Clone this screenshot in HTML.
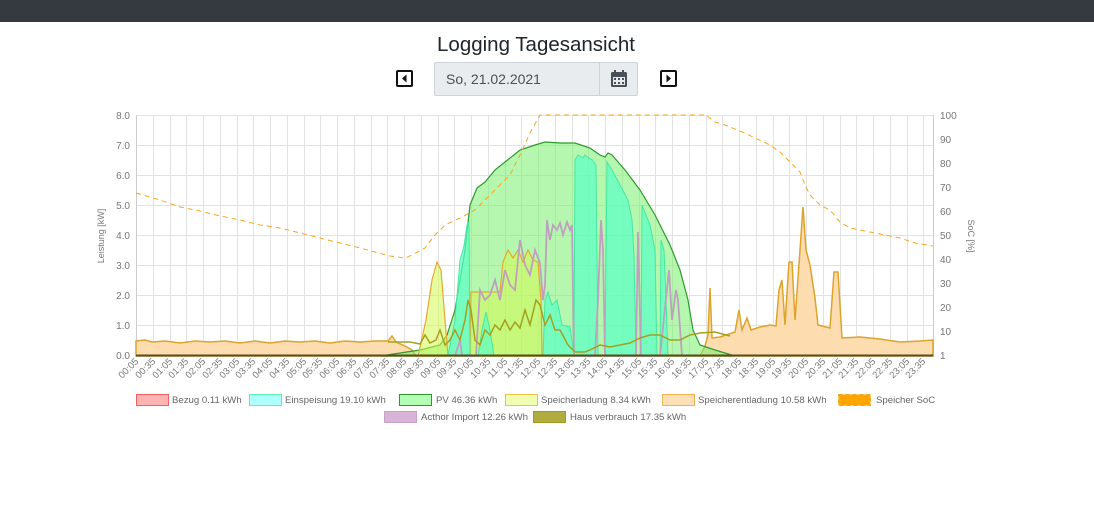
<!DOCTYPE html>
<html><head><meta charset="utf-8"><style>
body{margin:0;width:1094px;height:532px;background:#fff;font-family:"Liberation Sans",sans-serif;overflow:hidden;position:relative}
.top{height:22px;background:#343a40}
h1{position:absolute;top:33px;left:436px;width:200px;text-align:center;margin:0;font-weight:normal;font-size:20.5px;color:#212529;white-space:nowrap}
.date{position:absolute;left:434px;top:62px;width:202px;height:32px;border:1px solid #ced4da;background:#e9ecef;border-radius:2px}
.date span{position:absolute;left:11px;top:8px;font-size:14px;color:#495057}
.date .cal{position:absolute;left:164px;top:0;width:38px;height:32px;border-left:1px solid #ced4da}
.arrow{position:absolute;top:70px;width:17px;height:17px;border:2px solid #111;border-radius:2px;box-sizing:border-box}
</style></head><body>
<div class="top"></div>
<h1>Logging Tagesansicht</h1>
<div class="arrow" style="left:396px"><svg width="13" height="13" style="position:absolute;left:0;top:0"><path d="M8.5,2.5 L4,6.5 L8.5,10.5Z" fill="#111"/></svg></div>
<div class="date"><span>So, 21.02.2021</span><div class="cal"><svg width="38" height="32"><rect x="11" y="9" width="16" height="15" rx="1.5" fill="#495057"/><rect x="13" y="14" width="12" height="8" fill="#e9ecef"/><rect x="14" y="7" width="2" height="4" fill="#495057"/><rect x="22" y="7" width="2" height="4" fill="#495057"/><g fill="#495057"><rect x="14" y="15" width="2" height="2"/><rect x="18" y="15" width="2" height="2"/><rect x="22" y="15" width="2" height="2"/><rect x="14" y="19" width="2" height="2"/><rect x="18" y="19" width="2" height="2"/><rect x="22" y="19" width="2" height="2"/></g></svg></div></div>
<div class="arrow" style="left:660px"><svg width="13" height="13" style="position:absolute;left:0;top:0"><path d="M4.5,2.5 L9,6.5 L4.5,10.5Z" fill="#111"/></svg></div>

<svg width="1094" height="532" style="position:absolute;left:0;top:0" font-family="Liberation Sans, sans-serif">
<g stroke="#e2e2e2" stroke-width="1">
<line x1="136" y1="115.5" x2="933" y2="115.5"/><line x1="136" y1="145.5" x2="933" y2="145.5"/><line x1="136" y1="175.5" x2="933" y2="175.5"/><line x1="136" y1="205.5" x2="933" y2="205.5"/><line x1="136" y1="235.5" x2="933" y2="235.5"/><line x1="136" y1="265.5" x2="933" y2="265.5"/><line x1="136" y1="295.5" x2="933" y2="295.5"/><line x1="136" y1="325.5" x2="933" y2="325.5"/>
</g>
<g id="vg" stroke="#e2e2e2" stroke-width="1"></g>
<line x1="136.5" y1="115" x2="136.5" y2="357" stroke="#ccc"/>
<line x1="933.5" y1="115" x2="933.5" y2="357" stroke="#ccc"/>
<g font-size="10" fill="#777" text-anchor="end">
<text x="130" y="119">8.0</text><text x="130" y="149">7.0</text><text x="130" y="179">6.0</text><text x="130" y="209">5.0</text><text x="130" y="239">4.0</text><text x="130" y="269">3.0</text><text x="130" y="299">2.0</text><text x="130" y="329">1.0</text><text x="130" y="359">0.0</text>
</g>
<g font-size="10" fill="#777">
<text x="940" y="119">100</text><text x="940" y="143">90</text><text x="940" y="167">80</text><text x="940" y="191">70</text><text x="940" y="215">60</text><text x="940" y="239">50</text><text x="940" y="263">40</text><text x="940" y="287">30</text><text x="940" y="311">20</text><text x="940" y="335">10</text><text x="940" y="359">1</text>
</g>
<text transform="translate(104,236) rotate(-90)" font-size="9" fill="#777" text-anchor="middle">Leistung [kW]</text>
<text transform="translate(968,236) rotate(90)" font-size="9" fill="#777" text-anchor="middle">SoC [%]</text>

<path d="M136,356 L136,341 L145,340 L152,342 L165,341 L180,343 L195,341 L210,342 L225,341 L240,343 L255,341 L270,343 L285,341 L300,342 L315,341 L330,343 L345,341 L360,342 L375,341 L388,341 L392,336 L396,342 L405,346 L412,350 L416,356 L700,356 L705,346 L708,335 L710,288 L712,338 L720,337 L735,332 L739,310 L742,330 L747,318 L751,330 L760,327 L770,325 L776,326 L779,290 L782,280 L785,325 L789,262 L792,262 L795,320 L800,250 L803,207 L806,250 L810,265 L815,298 L818,325 L830,328 L834,272 L838,272 L842,338 L860,337 L880,339 L900,342 L920,341 L933,340 L933,356Z" fill="#fddcb0" stroke="#dca42a" stroke-width="1.5"/>
<path d="M380,356 L420,350 L440,345 L447,335 L455,310 L465,250 L470,205 L477,188 L485,182 L495,170 L505,162 L520,150 L535,145 L545,142 L560,143 L575,143 L590,148 L600,155 L605,157 L608,153 L612,155 L625,170 L640,190 L655,215 L670,245 L680,270 L688,300 L693,330 L700,345 L715,350 L735,356Z" fill="rgba(120,240,110,0.55)" stroke="#2e9a2e" stroke-width="1.2"/>
<g fill="rgba(210,250,80,0.55)" stroke="#e8a830" stroke-width="1.2">
<path d="M418,356 L426,320 L432,280 L437,262 L441,270 L445,320 L448,356Z"/>
<path d="M470,356 L471,292 L500,292 L503,262 L508,250 L513,258 L518,250 L523,262 L528,250 L533,260 L538,262 L541,300 L542,356Z"/>
</g>
<g fill="rgba(90,255,200,0.7)" stroke="#45e8a0" stroke-width="1">
<path d="M448,356 L455,320 L460,260 L464,246 L467,225 L469,222 L470,356Z"/>
<path d="M478,356 L482,330 L486,312 L490,330 L494,356Z"/>
<path d="M543,356 L545,300 L548,292 L552,305 L557,300 L562,325 L570,327 L574,356Z"/>
<path d="M574,356 L575,160 L578,155 L583,158 L585,155 L589,158 L592,160 L596,165 L598,356Z"/>
<path d="M605,356 L607,162 L612,170 L620,185 L628,200 L632,220 L634,255 L636,356Z"/>
<path d="M641,356 L642,205 L650,225 L655,250 L657,356Z"/>
<path d="M660,356 L661,240 L664,250 L666,300 L668,356Z"/>
</g>
<path d="M455,356 L460,340 L462,356 L476,356 L480,290 L485,300 L490,295 L495,280 L500,300 L505,270 L510,285 L515,290 L520,240 L525,265 L530,275 L535,250 L540,263 L543,300 L545,285 L547,220 L550,240 L553,225 L557,230 L560,223 L563,235 L567,222 L570,230 L572,225 L574,356 L595,356 L598,300 L601,220 L603,250 L605,356 L636,356 L638,232 L641,356 L660,356 L669,270 L672,320 L676,290 L678,300 L682,356" fill="none" stroke="#c0a0c0" stroke-width="1.8"/>
<path d="M388,342 L410,342 L420,344 L425,335 L430,343 L436,340 L440,330 L445,345 L450,340 L455,330 L460,340 L465,320 L468,300 L471,310 L475,340 L480,345 L485,330 L490,335 L495,325 L500,330 L505,320 L510,330 L515,322 L520,328 L525,310 L530,325 L536,300 L540,305 L545,325 L550,315 L555,330 L560,330 L568,345 L575,352 L585,352 L590,350 L600,345 L610,347 L620,345 L630,343 L640,338 L650,335 L660,335 L670,340 L680,340 L690,335 L700,333 L715,332 L730,336" fill="none" stroke="#a4a020" stroke-width="1.5"/>
<line x1="136" y1="355.5" x2="933" y2="355.5" stroke="#5a4a20" stroke-width="2"/>
<path d="M136,193 L160,200 L180,207 L200,211 L220,216 L240,220 L260,225 L280,228 L300,233 L320,238 L340,243 L360,248 L375,252 L390,256 L405,258 L412,255 L425,248 L435,235 L445,225 L460,218 L475,210 L490,195 L500,185 L510,175 L520,155 L530,133 L540,115 L706,115 L715,122 L725,125 L740,131 L755,138 L770,145 L780,152 L790,162 L800,172 L805,185 L810,195 L820,205 L830,210 L840,222 L850,228 L860,230 L880,234 L900,238 L915,243 L933,246" fill="none" stroke="#f5a623" stroke-width="1" stroke-dasharray="5,4"/>

<g font-size="9.5" fill="#777" text-anchor="end">
<text transform="translate(139,362) rotate(-45)">00:05</text><text transform="translate(156,362) rotate(-45)">00:35</text><text transform="translate(173,362) rotate(-45)">01:05</text><text transform="translate(189,362) rotate(-45)">01:35</text><text transform="translate(206,362) rotate(-45)">02:05</text><text transform="translate(223,362) rotate(-45)">02:35</text><text transform="translate(240,362) rotate(-45)">03:05</text><text transform="translate(256,362) rotate(-45)">03:35</text><text transform="translate(273,362) rotate(-45)">04:05</text><text transform="translate(290,362) rotate(-45)">04:35</text><text transform="translate(307,362) rotate(-45)">05:05</text><text transform="translate(323,362) rotate(-45)">05:35</text><text transform="translate(340,362) rotate(-45)">06:05</text><text transform="translate(357,362) rotate(-45)">06:35</text><text transform="translate(374,362) rotate(-45)">07:05</text><text transform="translate(390,362) rotate(-45)">07:35</text><text transform="translate(407,362) rotate(-45)">08:05</text><text transform="translate(424,362) rotate(-45)">08:35</text><text transform="translate(441,362) rotate(-45)">09:05</text><text transform="translate(457,362) rotate(-45)">09:35</text><text transform="translate(474,362) rotate(-45)">10:05</text><text transform="translate(491,362) rotate(-45)">10:35</text><text transform="translate(508,362) rotate(-45)">11:05</text><text transform="translate(524,362) rotate(-45)">11:35</text><text transform="translate(541,362) rotate(-45)">12:05</text><text transform="translate(558,362) rotate(-45)">12:35</text><text transform="translate(575,362) rotate(-45)">13:05</text><text transform="translate(591,362) rotate(-45)">13:35</text><text transform="translate(608,362) rotate(-45)">14:05</text><text transform="translate(625,362) rotate(-45)">14:35</text><text transform="translate(642,362) rotate(-45)">15:05</text><text transform="translate(658,362) rotate(-45)">15:35</text><text transform="translate(675,362) rotate(-45)">16:05</text><text transform="translate(692,362) rotate(-45)">16:35</text><text transform="translate(709,362) rotate(-45)">17:05</text><text transform="translate(725,362) rotate(-45)">17:35</text><text transform="translate(742,362) rotate(-45)">18:05</text><text transform="translate(759,362) rotate(-45)">18:35</text><text transform="translate(776,362) rotate(-45)">19:05</text><text transform="translate(792,362) rotate(-45)">19:35</text><text transform="translate(809,362) rotate(-45)">20:05</text><text transform="translate(826,362) rotate(-45)">20:35</text><text transform="translate(843,362) rotate(-45)">21:05</text><text transform="translate(859,362) rotate(-45)">21:35</text><text transform="translate(876,362) rotate(-45)">22:05</text><text transform="translate(893,362) rotate(-45)">22:35</text><text transform="translate(910,362) rotate(-45)">23:05</text><text transform="translate(926,362) rotate(-45)">23:35</text>
</g>

<g font-size="9.6" fill="#666">
<rect x="136.5" y="394.5" width="32" height="11" fill="#ffb3b3" stroke="#f06060"/><text x="172" y="403">Bezug 0.11 kWh</text>
<rect x="249.5" y="394.5" width="32" height="11" fill="#b0ffff" stroke="#60f0b0"/><text x="285" y="403">Einspeisung 19.10 kWh</text>
<rect x="399.5" y="394.5" width="32" height="11" fill="#b3ffb3" stroke="#2e9a2e"/><text x="436" y="403">PV 46.36 kWh</text>
<rect x="505.5" y="394.5" width="32" height="11" fill="#f2ffb3" stroke="#f0c040"/><text x="541" y="403">Speicherladung 8.34 kWh</text>
<rect x="662.5" y="394.5" width="32" height="11" fill="#fde0b8" stroke="#f5b050"/><text x="698" y="403">Speicherentladung 10.58 kWh</text>
<rect x="838.5" y="394.5" width="32" height="11" fill="#ffa500" stroke="#f5a623" stroke-dasharray="4,3"/><text x="876" y="403">Speicher SoC</text>
<rect x="384.5" y="411.5" width="32" height="11" fill="#d8b4d8" stroke="#c8a0c8"/><text x="421" y="420" textLength="107" lengthAdjust="spacingAndGlyphs">Acthor Import 12.26 kWh</text>
<rect x="533.5" y="411.5" width="32" height="11" fill="#b0ac40" stroke="#a09a20"/><text x="570" y="420">Haus verbrauch 17.35 kWh</text>
</g>
</svg>
<script>
var g=document.getElementById('vg'),s='';
for(var i=0;i<48;i++){var x=Math.round(136+16.75*i)+0.5;s+='<line x1="'+x+'" y1="115" x2="'+x+'" y2="356"/>';}
g.innerHTML=s;
</script>
</body></html>
